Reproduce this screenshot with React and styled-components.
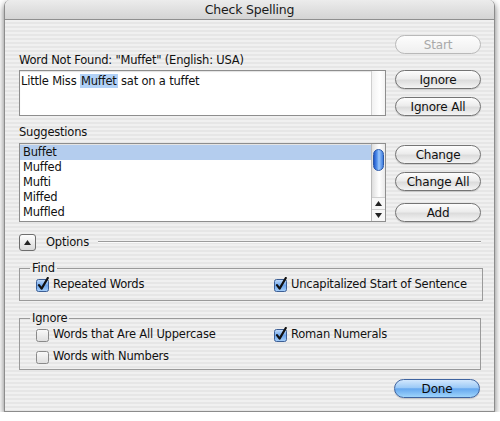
import React from "react";
import styled, { createGlobalStyle, css } from "styled-components";

const GlobalStyle = createGlobalStyle`
  html, body {
    margin: 0;
    padding: 0;
    background: #fff;
  }
  body {
    font-family: "DejaVu Sans", "Liberation Sans", sans-serif;
    font-size: 11.5px;
    letter-spacing: -0.2px;
    color: #111;
  }
`;

const Window = styled.div`
  width: 491px;
  margin-left: 4px;
  box-sizing: border-box;
  border: 1px solid #8c8c8c;
  border-top: none;
  border-radius: 6px 6px 0 0;
  overflow: hidden;
  box-shadow: 0 3px 7px rgba(0, 0, 0, 0.55);
  background: repeating-linear-gradient(
    to bottom,
    #f0f0f0 0px,
    #f0f0f0 2px,
    #e6e6e6 2px,
    #e6e6e6 4px
  );
`;

const TitleBar = styled.div`
  height: 19px;
  border-bottom: 1px solid #8f8f8f;
  background: linear-gradient(#ececec, #d4d4d4);
  display: flex;
  align-items: center;
  justify-content: center;
  font-size: 12.5px;
  color: #1a1a1a;
`;

const Body = styled.div`
  padding: 0 13px 13px 14px;
`;

const Section = styled.div`
  display: flex;
  gap: 9px;
  align-items: flex-start;
`;

const LeftCol = styled.div`
  width: 367px;
  padding-top: ${p => p.$top}px;
`;

const ButtonCol = styled.div`
  width: 86px;
  padding-top: ${p => p.$top}px;
  display: flex;
  flex-direction: column;
`;

const Label = styled.div`
  height: 14px;
  line-height: 14px;
  margin-bottom: ${p => p.$gap || 0}px;
  white-space: nowrap;
`;

const AquaButton = styled.button`
  height: 19px;
  width: 86px;
  box-sizing: border-box;
  border-radius: 10px;
  border: 1px solid #747474;
  background: linear-gradient(#fdfdfd 0%, #ececec 45%, #dcdcdc 55%, #f4f4f4 100%);
  font-family: "DejaVu Sans", "Liberation Sans", sans-serif;
  font-size: 12px;
  letter-spacing: -0.2px;
  color: #111;
  padding: 0;
  margin-bottom: ${p => p.$gap || 0}px;
  box-shadow: 0 1px 1px rgba(0, 0, 0, 0.15);

  ${p => p.disabled && css`
    border-color: #b9b9b9;
    color: #a9a9a9;
    background: linear-gradient(#fdfdfd, #efefef);
    box-shadow: none;
  `}

  ${p => p.$primary && css`
    border-color: #3f64a0;
    background: linear-gradient(#d2e7fd 0%, #9ccaf7 45%, #66a8ef 52%, #9ed4fb 100%);
    color: #0a0a0a;
  `}
`;

const Field = styled.div`
  display: flex;
  box-sizing: border-box;
  height: ${p => p.$height}px;
  border: 1px solid #8e8e8e;
  background: #fff;
  box-shadow: inset 0 1px 1px rgba(0, 0, 0, 0.12);
`;

const FieldText = styled.div`
  flex: 1;
  padding: 3px 0 0 1px;
  line-height: 15px;
`;

const Mark = styled.span`
  background: #b2d2f7;
  padding: 0 1px;
`;

const EmptyScroller = styled.div`
  width: 13px;
  border-left: 1px solid #cfcfcf;
  background: linear-gradient(to right, #f2f2f2, #ffffff 60%, #f4f4f4);
`;

const ListRows = styled.div`
  flex: 1;
  padding-top: 1px;
`;

const Row = styled.div`
  height: 15px;
  line-height: 15px;
  padding-left: 3px;
  background: ${p => (p.$selected ? "#b4cdee" : "transparent")};
`;

const Scroller = styled.div`
  width: 13px;
  border-left: 1px solid #b9b9b9;
  display: flex;
  flex-direction: column;
  background: linear-gradient(to right, #dedede, #ffffff 55%, #e9e9e9);
`;

const Thumb = styled.div`
  margin: 5px 1px 0 1px;
  height: 20px;
  border-radius: 6px;
  border: 1px solid #2b58a8;
  background: linear-gradient(to right, #1f57c8 0%, #5a97ee 35%, #9ec9fb 55%, #3f7de0 100%);
`;

const Track = styled.div`
  flex: 1;
`;

const Arrow = styled.div`
  height: 11px;
  display: flex;
  align-items: center;
  justify-content: center;
  border-top: 1px solid #cfcfcf;
  background: #f7f7f7;
`;

const OptionsRow = styled.div`
  display: flex;
  align-items: center;
  margin-top: 11px;
  height: 18px;
`;

const Disclosure = styled.div`
  width: 17px;
  height: 17px;
  box-sizing: border-box;
  border: 1px solid #6e6e6e;
  border-radius: 3px;
  background: linear-gradient(#fefefe, #d9d9d9);
  display: flex;
  align-items: center;
  justify-content: center;
  margin-right: 10px;
`;

const Rule = styled.div`
  flex: 1;
  margin-left: 9px;
  border-top: 1px solid #9c9c9c;
  border-bottom: 1px solid #fbfbfb;
`;

const Group = styled.fieldset`
  margin: 10px 0 0 0;
  padding: 1px 15px ${p => p.$bottom}px 15px;
  border: 1px solid #9a9a9a;
  display: grid;
  grid-template-columns: 238px 1fr;
  row-gap: 6px;
`;

const Legend = styled.legend`
  padding: 0 2px;
  margin-left: -5px;
  line-height: 14px;
`;

const CheckItem = styled.label`
  display: flex;
  align-items: center;
  height: 16px;
  gap: 3px;
  white-space: nowrap;
`;

const Footer = styled.div`
  display: flex;
  justify-content: flex-end;
  margin-top: 9px;
  padding-right: 1px;
`;

function CheckBox({ checked }) {
  return (
    <svg width="15" height="15" viewBox="0 0 15 15">
      <defs>
        <linearGradient id="cbOn" x1="0" y1="0" x2="0" y2="1">
          <stop offset="0" stopColor="#c6defa" />
          <stop offset="0.5" stopColor="#6ea6ec" />
          <stop offset="1" stopColor="#a8d0fa" />
        </linearGradient>
        <linearGradient id="cbOff" x1="0" y1="0" x2="0" y2="1">
          <stop offset="0" stopColor="#fafafa" />
          <stop offset="1" stopColor="#dedede" />
        </linearGradient>
      </defs>
      <rect
        x="1.5"
        y="2.5"
        width="12"
        height="12"
        rx="2"
        fill={checked ? "url(#cbOn)" : "url(#cbOff)"}
        stroke={checked ? "#3d5f95" : "#8a8a8a"}
      />
      {checked && (
        <path
          d="M4 8.2 L6.6 11.6 L12.8 1"
          fill="none"
          stroke="#111"
          strokeWidth="2.2"
          strokeLinecap="round"
          strokeLinejoin="round"
        />
      )}
    </svg>
  );
}

function Check({ checked, children }) {
  return (
    <CheckItem>
      <CheckBox checked={checked} />
      {children}
    </CheckItem>
  );
}

function Tri({ up }) {
  return (
    <svg width="7" height="5" viewBox="0 0 7 5">
      <path d={up ? "M3.5 0 L7 5 L0 5 Z" : "M0 0 L7 0 L3.5 5 Z"} fill="#222" />
    </svg>
  );
}

const suggestions = ["Buffet", "Muffed", "Mufti", "Miffed", "Muffled"];

export default function App() {
  return (
    <>
      <GlobalStyle />
      <Window>
        <TitleBar>Check Spelling</TitleBar>
        <Body>
          <Section>
            <LeftCol $top={33}>
              <Label $gap={3}>Word Not Found: "Muffet" (English: USA)</Label>
              <Field $height={46}>
                <FieldText>
                  Little Miss <Mark>Muffet</Mark> sat on a tuffet
                </FieldText>
                <EmptyScroller />
              </Field>
            </LeftCol>
            <ButtonCol $top={15}>
              <AquaButton disabled $gap={16}>Start</AquaButton>
              <AquaButton $gap={8}>Ignore</AquaButton>
              <AquaButton>Ignore All</AquaButton>
            </ButtonCol>
          </Section>

          <Section>
            <LeftCol $top={9}>
              <Label $gap={4}>Suggestions</Label>
              <Field $height={79}>
                <ListRows>
                  {suggestions.map((s, i) => (
                    <Row key={s} $selected={i === 0}>{s}</Row>
                  ))}
                </ListRows>
                <Scroller>
                  <Thumb />
                  <Track />
                  <Arrow><Tri up /></Arrow>
                  <Arrow><Tri /></Arrow>
                </Scroller>
              </Field>
            </LeftCol>
            <ButtonCol $top={29}>
              <AquaButton $gap={8}>Change</AquaButton>
              <AquaButton $gap={12}>Change All</AquaButton>
              <AquaButton>Add</AquaButton>
            </ButtonCol>
          </Section>

          <OptionsRow>
            <Disclosure><Tri up /></Disclosure>
            Options
            <Rule />
          </OptionsRow>

          <Group $bottom={8}>
            <Legend>Find</Legend>
            <Check checked>Repeated Words</Check>
            <Check checked>Uncapitalized Start of Sentence</Check>
          </Group>

          <Group $bottom={5}>
            <Legend>Ignore</Legend>
            <Check>Words that Are All Uppercase</Check>
            <Check checked>Roman Numerals</Check>
            <Check>Words with Numbers</Check>
          </Group>

          <Footer>
            <AquaButton $primary>Done</AquaButton>
          </Footer>
        </Body>
      </Window>
    </>
  );
}
